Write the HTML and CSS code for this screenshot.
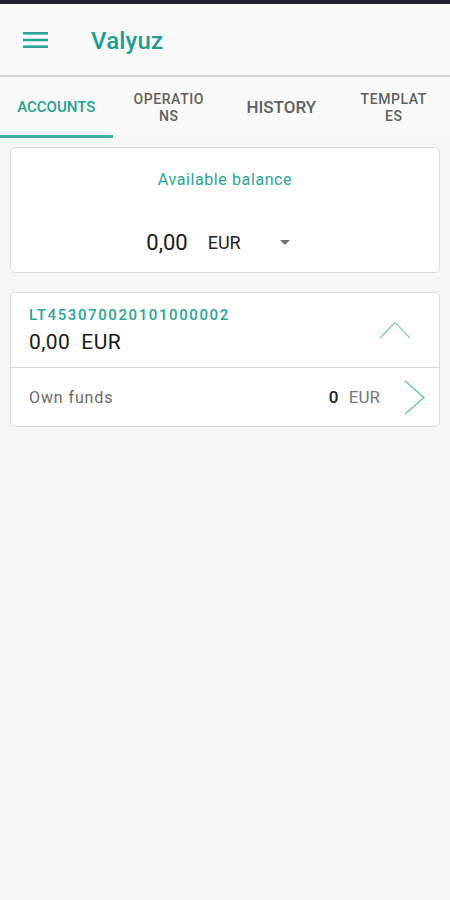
FILE: index.html
```html
<!DOCTYPE html>
<html lang="en">
<head>
  <meta charset="UTF-8">
  <meta name="viewport" content="width=device-width, initial-scale=1.0">
  <title>Valyuz</title>
  <link rel="stylesheet" href="styles.css">
</head>
<body>
  <div class="status-bar"></div>

  <header class="app-bar">
    <svg class="menu-icon" width="25" height="18" viewBox="0 0 25 18">
      <rect x="0" y="1" width="25" height="2.6" fill="#26a69a" />
      <rect x="0" y="7.7" width="25" height="2.6" fill="#26a69a" />
      <rect x="0" y="14.4" width="25" height="2.6" fill="#26a69a" />
    </svg>
    <h1 class="app-title">Valyuz</h1>
  </header>

  <nav class="tabs">
    <div class="tab active">ACCOUNTS</div>
    <div class="tab small">OPERATIO<br>NS</div>
    <div class="tab large">HISTORY</div>
    <div class="tab small">TEMPLAT<br>ES</div>
  </nav>

  <main class="content">
    <!-- total balance -->
    <section class="card balance-card">
      <div class="balance-label">Available balance</div>
      <div class="balance-row">
        <span class="balance-amount">0,00</span>
        <span class="balance-currency">EUR</span>
        <svg class="dropdown" width="10" height="5" viewBox="0 0 10 5">
          <polygon points="0,0 10,0 5,5" fill="#707070" />
        </svg>
      </div>
    </section>

    <!-- account -->
    <section class="card account-card">
      <div class="account-head">
        <div>
          <div class="account-number">LT453070020101000002</div>
          <div class="account-amount">0,00&nbsp; EUR</div>
        </div>
        <svg class="chevron-up" width="32" height="18" viewBox="0 0 32 18">
          <polyline points="1,17 16,1.5 31,17" fill="none" stroke="#8dcfc6" stroke-width="1.5" />
        </svg>
      </div>
      <div class="account-row">
        <span class="row-label">Own funds</span>
        <span class="row-value"><b>0</b>&nbsp; EUR</span>
        <svg class="chevron-right" width="22" height="35" viewBox="0 0 22 35">
          <polyline points="1,1 20,17.5 1,34" fill="none" stroke="#6cc3b8" stroke-width="1.5" />
        </svg>
      </div>
    </section>
  </main>
</body>
</html>
```

FILE: styles.css
```css
body {
  margin: 0;
  font-family: Roboto, "Noto Sans", sans-serif;
  background: #f6f6f6;
  color: #222;
}

.status-bar {
  height: 4px;
  background: #1b2330;
}

.app-bar {
  display: flex;
  align-items: center;
  height: 71px;
  padding-left: 23px;
  background: #fafafa;
  border-bottom: 2px solid #d4d4d4;
}

.menu-icon {
  display: block;
  margin-top: 1px;
}

.app-title {
  margin: 3px 0 0 43px;
  font-size: 24px;
  font-weight: 500;
  color: #1f9d90;
  letter-spacing: 0.2px;
}

.tabs {
  display: flex;
  height: 61px;
  background: #fafafa;
}

.tab {
  flex: 1;
  display: flex;
  align-items: center;
  justify-content: center;
  text-align: center;
  font-size: 15px;
  font-weight: 500;
  color: #5f5f5f;
  line-height: 17px;
  border-bottom: 3px solid transparent;
  padding-top: 3px;
}

.tab.small {
  font-size: 14px;
  letter-spacing: 0.6px;
}

.tab.large {
  font-size: 17px;
}

.tab.active {
  color: #24a093;
  border-bottom-color: #3fae9f;
}

.content {
  padding: 9px 10px;
}

.card {
  background: #fff;
  border: 1px solid #dcdcdc;
  border-radius: 5px;
  margin-bottom: 19px;
}

.balance-card {
  height: 124px;
  display: flex;
  flex-direction: column;
  align-items: center;
}

.balance-label {
  margin-top: 22px;
  font-size: 16px;
  letter-spacing: 0.6px;
  color: #2aa596;
}

.balance-row {
  display: flex;
  align-items: center;
  height: 26px;
  margin-top: 40px;
  padding-right: 14px;
}

.balance-amount {
  font-size: 22px;
  color: #1a1a1a;
}

.balance-currency {
  margin-left: 20px;
  font-size: 18px;
  color: #222;
}

.dropdown {
  margin-left: 39px;
}

.account-head {
  display: flex;
  justify-content: space-between;
  height: 74px;
  padding: 0 28px 0 18px;
  border-bottom: 1px solid #d8d8d8;
}

.account-number {
  margin-top: 13px;
  font-size: 15px;
  line-height: 18px;
  font-weight: 500;
  color: #2aa596;
  letter-spacing: 1.6px;
}

.account-amount {
  margin-top: 6px;
  font-size: 21px;
  line-height: 25px;
  letter-spacing: 0.4px;
  color: #1a1a1a;
}

.chevron-up {
  margin-top: 28px;
}

.account-row {
  display: flex;
  align-items: center;
  height: 58px;
  padding: 0 13px 0 18px;
}

.row-label {
  flex: 1;
  font-size: 16px;
  letter-spacing: 0.9px;
  color: #6a6a6a;
}

.row-value {
  font-size: 17px;
  color: #777;
  margin-right: 24px;
}

.row-value b {
  font-weight: 500;
  color: #222;
  margin-right: 2px;
}
```
